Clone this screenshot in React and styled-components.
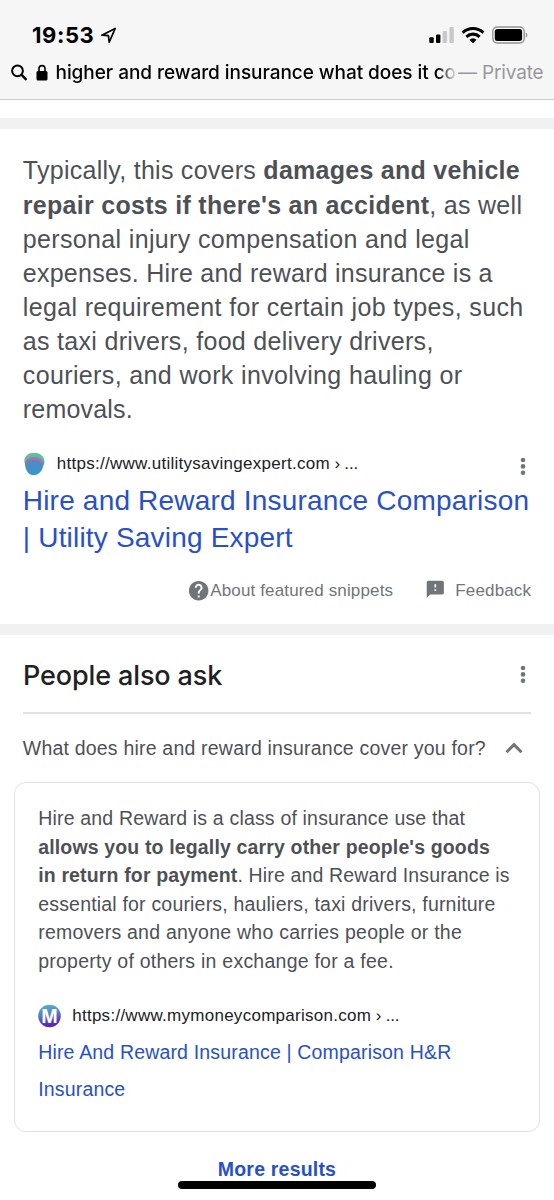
import React from "react";
import styled, { createGlobalStyle } from "styled-components";
import { MdHelp, MdFeedback } from "react-icons/md";

const GlobalStyle = createGlobalStyle`
  * {
    box-sizing: border-box;
  }
  body {
    margin: 0;
    background: #fff;
    font-family: "Liberation Sans", Arial, sans-serif;
  }
`;

const Phone = styled.div`
  position: relative;
  width: 554px;
  height: 1200px;
  overflow: hidden;
  background: #fff;
`;

const Header = styled.header`
  height: 100px;
  padding-top: 20px;
  background: #f6f6f7;
  border-bottom: 1px solid #c9c9cb;
  font-family: Inter, sans-serif;
`;

const StatusBar = styled.div`
  display: flex;
  align-items: center;
  height: 30px;
  padding: 0 26px 0 32px;
`;

const Time = styled.span`
  font-size: 22px;
  font-weight: 700;
  letter-spacing: 0.6px;
  line-height: 30px;
  margin-right: 5.5px;
`;

const StatusIcons = styled.div`
  display: flex;
  align-items: center;
  margin-left: auto;
`;

const WifiSlot = styled.span`
  display: flex;
  margin: 0 7px 0 6px;
`;

const AddressBar = styled.div`
  display: flex;
  align-items: center;
  height: 30px;
  margin-top: 7px;
  padding-left: 11px;
  font-size: 19px;
  line-height: 30px;
  white-space: nowrap;
`;

const Query = styled.div`
  width: 399px;
  margin-left: 7.5px;
  padding-top: 2px;
  overflow: hidden;
  font-weight: 500;
  letter-spacing: -0.05px;
  -webkit-mask-image: linear-gradient(to right, #000 382px, transparent 401px);
  mask-image: linear-gradient(to right, #000 382px, transparent 401px);
`;

const PrivateLabel = styled.span`
  margin-left: 3.5px;
  padding-top: 2px;
  color: #98989b;
  letter-spacing: -0.15px;
`;

const Divider = styled.div`
  height: 11px;
  margin-top: ${(p) => p.$top || 0}px;
  background: #eff1f2;
`;

const Snippet = styled.section`
  height: 495px;
  padding: 24.4px 22px 0 22.8px;
`;

const SnippetText = styled.p`
  margin: 0;
  color: #4d5156;
  font-size: 25px;
  line-height: 34.14px;
`;

const Line = styled.span`
  display: block;
  white-space: nowrap;
  letter-spacing: ${(p) => p.$ls}px;
`;

const SourceRow = styled.div`
  display: flex;
  align-items: center;
  height: 30px;
  margin-top: ${(p) => p.$top}px;
`;

const SourceUrl = styled.span`
  margin-left: 10px;
  color: #202124;
  font-size: 17px;
  letter-spacing: 0.27px;
  white-space: nowrap;
`;

const Crumb = styled.span`
  letter-spacing: -0.2px;
`;

const MoreButton = styled.button`
  display: flex;
  margin: ${(p) => p.$top || 0}px ${(p) => p.$right || 5}px 0 auto;
  padding: 0;
  border: 0;
  background: none;
`;

const ResultTitle = styled.a`
  display: block;
  margin-top: 3.9px;
  color: #2850c8;
  font-size: 28px;
  line-height: 37px;
`;

const SnippetFooter = styled.div`
  display: flex;
  align-items: center;
  height: 24px;
  margin-top: 22.4px;
  padding-left: 164.5px;
  color: #70757a;
  font-size: 17px;
  letter-spacing: 0.15px;
  white-space: nowrap;
`;

const HelpIcon = styled(MdHelp)`
  flex: none;
  margin-right: -0.5px;
  font-size: 23.4px;
`;

const FeedbackIcon = styled(MdFeedback)`
  flex: none;
  margin: -3px 10px 0 31.5px;
  font-size: 20.6px;
`;

const AskHeader = styled.div`
  display: flex;
  align-items: center;
  height: 79px;
  margin: 0 23px;
  padding: 3.5px 0 0;
  border-bottom: 2px solid #dfe1e5;
`;

const AskTitle = styled.h2`
  margin: 0;
  color: #202124;
  font-family: Inter, sans-serif;
  font-size: 27px;
  font-weight: 500;
  letter-spacing: -0.12px;
`;

const Question = styled.div`
  display: flex;
  align-items: center;
  justify-content: space-between;
  height: 68px;
  padding: 0 31px 0 22.8px;
  color: #4d5156;
  font-size: 19.5px;
  letter-spacing: 0.2px;
  white-space: nowrap;
`;

const AnswerCard = styled.div`
  width: 526px;
  height: 350px;
  margin-left: 14px;
  padding: 21px 20px 0 23.2px;
  border: 1.5px solid #dfe1e5;
  border-radius: 12px;
`;

const AnswerText = styled.p`
  margin: 0;
  color: #4d5156;
  font-size: 19.5px;
  line-height: 28.5px;
`;

const AnswerLink = styled.a`
  display: block;
  margin-top: 3.2px;
  color: #2850c8;
  font-size: 19.5px;
  line-height: 37px;
`;

const MoreResults = styled.a`
  display: block;
  height: 68px;
  color: #2850c8;
  font-size: 19.5px;
  font-weight: 700;
  letter-spacing: 0.2px;
  line-height: 74px;
  text-align: center;
`;

const HomeIndicator = styled.div`
  position: absolute;
  left: 178px;
  bottom: 11.5px;
  width: 198px;
  height: 7.5px;
  border-radius: 4px;
  background: #000;
`;

const LocationArrow = () => (
  <svg width="17" height="17" viewBox="0 0 17 17" fill="none" stroke="#000" strokeWidth="1.7" strokeLinejoin="round">
    <path d="M15.2 1.5 1.8 8.2l6.6.5.8 6.5z" />
  </svg>
);

const Signal = () => (
  <svg width="26" height="18" viewBox="0 0 26 18">
    <rect x="0.3" y="11.2" width="4.4" height="5.8" rx="1" />
    <rect x="7" y="8.5" width="4.4" height="8.5" rx="1" />
    <rect x="13.7" y="5" width="4.4" height="12" rx="1" fill="#c8c8ca" />
    <rect x="20.4" y="1" width="4.4" height="16" rx="1" fill="#c8c8ca" />
  </svg>
);

const Wifi = () => (
  <svg width="24" height="18" viewBox="0 0 24 18" fill="none" stroke="#000" strokeWidth="3.2">
    <path d="M1.6 6.6a15.3 15.3 0 0 1 20.8 0" />
    <path d="M5.4 10.8a9.6 9.6 0 0 1 13.2 0" />
    <path d="M12 17.2 8.5 13.8a5.2 5.2 0 0 1 7 0z" fill="#000" stroke="none" />
  </svg>
);

const Battery = () => (
  <svg width="36" height="18" viewBox="0 0 36 18">
    <rect x="0.8" y="1" width="31.4" height="16" rx="4.4" fill="none" stroke="#929294" strokeWidth="1.4" />
    <rect x="2.8" y="3.1" width="27.3" height="11.8" rx="2.6" />
    <path d="M33.8 6.4c2 .8 2 4.4 0 5.2z" fill="#929294" />
  </svg>
);

const SearchIcon = () => (
  <svg width="16" height="17" viewBox="0 0 16 17" fill="none" stroke="#000" strokeWidth="2">
    <circle cx="6.5" cy="6.8" r="5.4" />
    <path d="m10.4 10.7 4.3 4.5" strokeWidth="2.4" strokeLinecap="round" />
  </svg>
);

const LockIcon = styled(({ className }) => (
  <svg className={className} width="12" height="17" viewBox="0 0 12 17">
    <path d="M3 8V4.6a3 3 0 0 1 6 0V8" fill="none" stroke="#000" strokeWidth="1.6" />
    <rect x="0.5" y="7" width="11" height="9.4" rx="1.5" />
  </svg>
))`
  margin-left: 9px;
`;

const Dots = () => (
  <svg width="6" height="20" viewBox="0 0 6 20" fill="#70757a">
    <circle cx="3" cy="3" r="2.3" />
    <circle cx="3" cy="9.4" r="2.3" />
    <circle cx="3" cy="15.8" r="2.3" />
  </svg>
);

const ChevronUp = () => (
  <svg width="18" height="12" viewBox="0 0 18 12" fill="none" stroke="#70757a" strokeWidth="3">
    <path d="m1.5 10.2 7.5-7.5 7.5 7.5" />
  </svg>
);

const ExpertLogo = () => (
  <svg width="24" height="24" viewBox="0 0 24 24">
    <defs>
      <linearGradient id="expertBlue" x1="0" y1="0" x2="0.3" y2="1">
        <stop offset="0" stopColor="#5f83bd" />
        <stop offset="1" stopColor="#3598cc" />
      </linearGradient>
    </defs>
    <path d="M1.300 9.500C1.300 4 5.500.8 11.300.8S21.700 4.8 21.500 10c0 4-2.500 6-5 7L3 14z" fill="#5fbd9c" />
    <path d="M1.600 11C3 7 7 5 11.500 5.200S20 7.500 21 11.500L17 16 3 14z" fill="#a573b0" />
    <path d="M2 12c1.500-3 5-4.200 8.500-4s8.300 1.500 9.500 5.100c0 5.500-4 10.100-9.200 10.100S2.600 19 2 12z" fill="url(#expertBlue)" />
  </svg>
);

const MoneyLogo = () => (
  <svg width="24" height="24" viewBox="0 0 24 24">
    <defs>
      <linearGradient id="moneyFill" x1="0" y1="0" x2="0.2" y2="1">
        <stop offset="0" stopColor="#4fc0c4" />
        <stop offset="0.5" stopColor="#5a7cc4" />
        <stop offset="1" stopColor="#5a22b4" />
      </linearGradient>
    </defs>
    <circle cx="11.500" cy="12" r="11.3" fill="url(#moneyFill)" />
    <text
      x="11.500"
      y="18.6"
      fill="#fff"
      fontFamily="Inter, sans-serif"
      fontSize="19"
      fontWeight="700"
      textAnchor="middle"
      textLength="16"
      lengthAdjust="spacingAndGlyphs"
    >
      M
    </text>
  </svg>
);

const App = () => {
  return (
    <Phone>
      <GlobalStyle />
      <Header>
        <StatusBar>
          <Time>19:53</Time>
          <LocationArrow />
          <StatusIcons>
            <Signal />
            <WifiSlot>
              <Wifi />
            </WifiSlot>
            <Battery />
          </StatusIcons>
        </StatusBar>
        <AddressBar>
          <SearchIcon />
          <LockIcon />
          <Query>higher and reward insurance what does it co</Query>
          <PrivateLabel>— Private</PrivateLabel>
        </AddressBar>
      </Header>

      <Divider $top={18} />

      <Snippet>
        <SnippetText>
          <Line $ls={0.27}>
            Typically, this covers <b>damages and vehicle</b>
          </Line>
          <Line $ls={0.29}>
            <b>repair costs if there's an accident</b>, as well
          </Line>
          <Line $ls={0.35}>personal injury compensation and legal</Line>
          <Line $ls={0.25}>expenses. Hire and reward insurance is a</Line>
          <Line $ls={0.35}>legal requirement for certain job types, such</Line>
          <Line $ls={0.31}>as taxi drivers, food delivery drivers,</Line>
          <Line $ls={0.37}>couriers, and work involving hauling or</Line>
          <Line $ls={0.2}>removals.</Line>
        </SnippetText>
        <SourceRow $top={22}>
          <ExpertLogo />
          <SourceUrl>
            https://www.utilitysavingexpert.com<Crumb> › ...</Crumb>
          </SourceUrl>
          <MoreButton $top={6} $right={6.5}>
            <Dots />
          </MoreButton>
        </SourceRow>
        <ResultTitle>
          <Line $ls={0.19}>Hire and Reward Insurance Comparison</Line>
          <Line $ls={0.19}>| Utility Saving Expert</Line>
        </ResultTitle>
        <SnippetFooter>
          <HelpIcon />
          About featured snippets
          <FeedbackIcon />
          Feedback
        </SnippetFooter>
      </Snippet>

      <Divider />

      <AskHeader>
        <AskTitle>People also ask</AskTitle>
        <MoreButton $right={5.5}>
          <Dots />
        </MoreButton>
      </AskHeader>
      <Question>
        What does hire and reward insurance cover you for?
        <ChevronUp />
      </Question>
      <AnswerCard>
        <AnswerText>
          <Line $ls={0.18}>Hire and Reward is a class of insurance use that</Line>
          <Line $ls={0.15}>
            <b>allows you to legally carry other people's goods</b>
          </Line>
          <Line $ls={0.15}>
            <b>in return for payment</b>. Hire and Reward Insurance is
          </Line>
          <Line $ls={0.19}>essential for couriers, hauliers, taxi drivers, furniture</Line>
          <Line $ls={0.24}>removers and anyone who carries people or the</Line>
          <Line $ls={0.24}>property of others in exchange for a fee.</Line>
        </AnswerText>
        <SourceRow $top={25.5}>
          <MoneyLogo />
          <SourceUrl>
            https://www.mymoneycomparison.com<Crumb> › ...</Crumb>
          </SourceUrl>
        </SourceRow>
        <AnswerLink>
          <Line $ls={0.17}>Hire And Reward Insurance | Comparison H&R</Line>
          <Line $ls={0.17}>Insurance</Line>
        </AnswerLink>
      </AnswerCard>
      <MoreResults>More results</MoreResults>
      <HomeIndicator />
    </Phone>
  );
};

export default App;
